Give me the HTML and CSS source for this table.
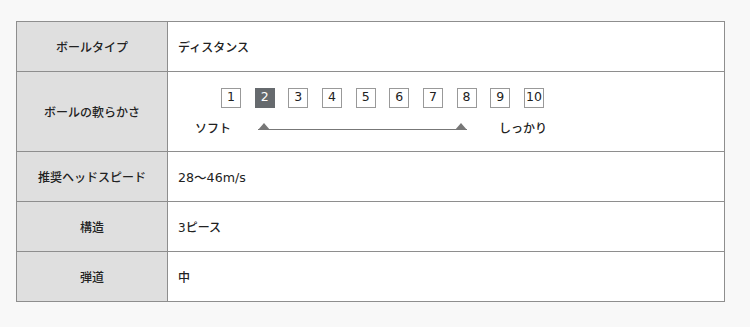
FILE: index.html
```html
<!DOCTYPE html>
<html lang="ja">
<head>
<meta charset="utf-8">
<link rel="stylesheet" href="styles.css">
</head>
<body>
<div class="wrap">
  <table class="spec">
    <tr>
      <th>ボールタイプ</th>
      <td>ディスタンス</td>
    </tr>
    <tr class="tall">
      <th>ボールの軟らかさ</th>
      <td>
        <div class="slider">
          <div class="boxes">
            <span class="box">1</span>
            <span class="box on">2</span>
            <span class="box">3</span>
            <span class="box">4</span>
            <span class="box">5</span>
            <span class="box">6</span>
            <span class="box">7</span>
            <span class="box">8</span>
            <span class="box">9</span>
            <span class="box">10</span>
          </div>
          <div class="scale">
            <span class="lbl soft">ソフト</span>
            <span class="line"></span>
            <span class="lbl hard">しっかり</span>
          </div>
        </div>
      </td>
    </tr>
    <tr>
      <th>推奨ヘッドスピード</th>
      <td><span class="num">28～46m/s</span></td>
    </tr>
    <tr>
      <th>構造</th>
      <td>3ピース</td>
    </tr>
    <tr>
      <th>弾道</th>
      <td>中</td>
    </tr>
  </table>
</div>
</body>
</html>
```

FILE: styles.css
```css
html, body {
  margin: 0;
  padding: 0;
  background: #f8f8f8;
}
body {
  font-family: "DejaVu Sans", "Noto Sans CJK JP", sans-serif;
  color: #222;
  font-size: 12px;
  font-weight: 500;
}
.wrap {
  padding: 21px 26px 0 16px;
}
.spec {
  width: 709px;
  border-collapse: collapse;
  background: #fff;
}
.spec th, .spec td {
  border: 1px solid #8e8e8e;
  height: 49px;
  padding: 0;
  vertical-align: middle;
}
.spec th {
  width: 150px;
  background: #dfdfdf;
  font-weight: 500;
  text-align: center;
  font-size: 12px;
}
.spec td {
  padding-left: 10px;
  font-size: 12px;
}
.num {
  font-size: 12.6px;
}
.spec tr.tall th, .spec tr.tall td {
  height: 79px;
}
.slider {
  padding-left: 17px;
  padding-top: 2px;
}
.boxes {
  display: flex;
  gap: 13.67px;
  padding-left: 26px;
}
.box {
  box-sizing: border-box;
  width: 20px;
  height: 20px;
  border: 1px solid #999;
  background: #fff;
  display: flex;
  align-items: center;
  justify-content: center;
  font-size: 12.5px;
  font-weight: normal;
  line-height: 1;
  color: #222;
}
.box.on {
  background: #666a6e;
  border-color: #666a6e;
  color: #fff;
}
.scale {
  display: flex;
  align-items: center;
  margin-top: 10px;
  height: 20px;
}
.lbl {
  font-size: 12px;
}
.soft {
  width: 63px;
}
.line {
  position: relative;
  width: 209px;
  height: 1px;
  background: #777;
  margin-top: 4px;
}
.line::before, .line::after {
  content: "";
  position: absolute;
  bottom: 0;
  border-left: 6px solid transparent;
  border-right: 6px solid transparent;
  border-bottom: 7px solid #777;
}
.line::before {
  left: 0;
}
.line::after {
  right: 0;
}
.hard {
  margin-left: 32px;
}
```
